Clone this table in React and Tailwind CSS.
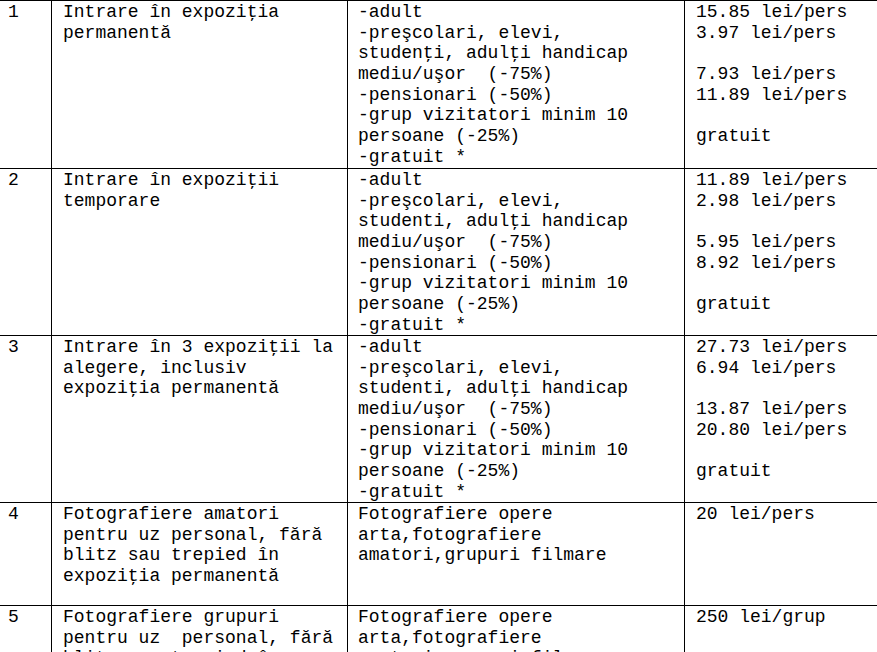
import React from "react";

const rows = [
  {
    n: "1",
    h: "h-[168px]",
    a: ["Intrare în expoziţia", "permanentă"],
    b: [
      "-adult",
      "-preşcolari, elevi,",
      "studenţi, adulţi handicap",
      "mediu/uşor  (-75%)",
      "-pensionari (-50%)",
      "-grup vizitatori minim 10",
      "persoane (-25%)",
      "-gratuit *",
    ],
    c: ["15.85 lei/pers", "3.97 lei/pers", "", "7.93 lei/pers", "11.89 lei/pers", "", "gratuit"],
  },
  {
    n: "2",
    h: "h-[167px]",
    a: ["Intrare în expoziţii", "temporare"],
    b: [
      "-adult",
      "-preşcolari, elevi,",
      "studenti, adulţi handicap",
      "mediu/uşor  (-75%)",
      "-pensionari (-50%)",
      "-grup vizitatori minim 10",
      "persoane (-25%)",
      "-gratuit *",
    ],
    c: ["11.89 lei/pers", "2.98 lei/pers", "", "5.95 lei/pers", "8.92 lei/pers", "", "gratuit"],
  },
  {
    n: "3",
    h: "h-[167px]",
    a: ["Intrare în 3 expoziţii la", "alegere, inclusiv", "expoziţia permanentă"],
    b: [
      "-adult",
      "-preşcolari, elevi,",
      "studenti, adulţi handicap",
      "mediu/uşor  (-75%)",
      "-pensionari (-50%)",
      "-grup vizitatori minim 10",
      "persoane (-25%)",
      "-gratuit *",
    ],
    c: ["27.73 lei/pers", "6.94 lei/pers", "", "13.87 lei/pers", "20.80 lei/pers", "", "gratuit"],
  },
  {
    n: "4",
    h: "h-[103px]",
    a: ["Fotografiere amatori", "pentru uz personal, fără", "blitz sau trepied în", "expoziţia permanentă"],
    b: ["Fotografiere opere", "arta,fotografiere", "amatori,grupuri filmare"],
    c: ["20 lei/pers"],
  },
  {
    n: "5",
    h: "h-[124px]",
    a: ["Fotografiere grupuri", "pentru uz  personal, fără", "blitz sau trepied în", "expoziţia permanentă"],
    b: ["Fotografiere opere", "arta,fotografiere", "amatori,grupuri filmare"],
    c: ["250 lei/grup"],
  },
];

function Lines({ items }) {
  return (
    <>
      {items.map((t, i) => (
        <div key={i} className="whitespace-pre h-[20.7px]">
          {t === "" ? "\u00a0" : t}
        </div>
      ))}
    </>
  );
}

export default function App() {
  return (
    <div className="w-[877px] h-[652px] overflow-hidden bg-white text-black text-[18px] leading-[20.7px] font-['Courier_New','Nimbus_Mono_PS','FreeMono','Liberation_Mono',monospace]">
      <div className="border-t border-black">
        {rows.map((r) => (
          <div key={r.n} className={`flex border-b border-black ${r.h}`}>
            <div className="w-[52px] shrink-0 border-r border-black pl-[8px] pt-[1px]">{r.n}</div>
            <div className="w-[296px] shrink-0 border-r border-black pl-[11px] pt-[1px]">
              <Lines items={r.a} />
            </div>
            <div className="w-[337px] shrink-0 border-r border-black pl-[10px] pt-[1px]">
              <Lines items={r.b} />
            </div>
            <div className="flex-1 pl-[11px] pt-[1px]">
              <Lines items={r.c} />
            </div>
          </div>
        ))}
      </div>
    </div>
  );
}
